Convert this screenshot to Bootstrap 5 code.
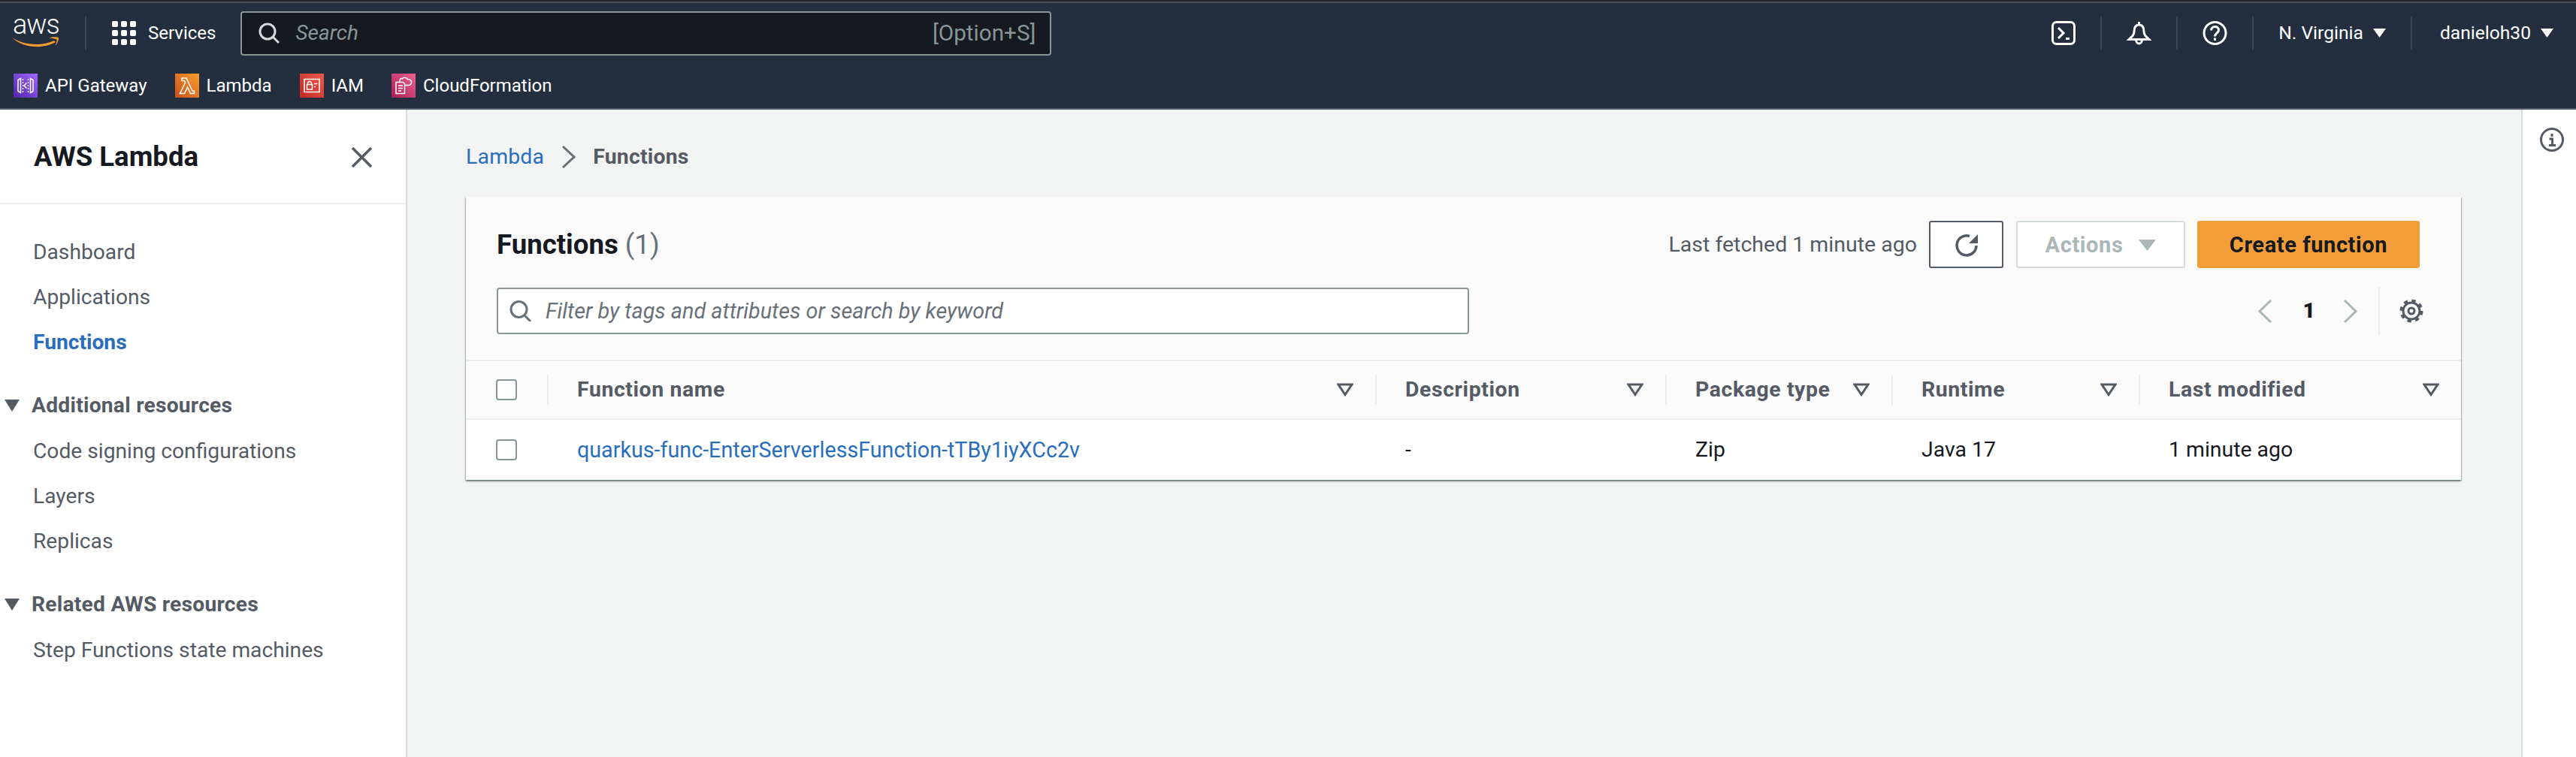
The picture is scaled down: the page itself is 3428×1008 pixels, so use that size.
<!DOCTYPE html>
<html lang="en">
<head>
    <meta charset="UTF-8">
    <title>Functions | Lambda</title>
    <link href="https://cdn.jsdelivr.net/npm/bootstrap@5.3.0/dist/css/bootstrap.min.css" rel="stylesheet">
    <style>
        html, body { height: 100%; }
        body {
            font-family: Roboto, "Liberation Sans", sans-serif;
            font-size: 28.4px;
            line-height: 40px;
            color: #16191f;
            background: #f2f3f3;
            overflow: hidden;
        }
        svg { display: block; flex: none; }

        /* top console bar */
        .console-bar { background: #232f3e; color: #fff; font-size: 24px; flex: none; }
        .bar-edge { height: 2px; background: #1d2632; }
        .bar-main { height: 82px; border-top: 2px solid #4b5058; padding: 0 30px 0 15px; }
        .bar-favs { height: 60px; padding-left: 18px; gap: 37px; border-bottom: 2px solid #545b64; box-sizing: content-box; }
        .bar-sep { width: 2px; height: 44px; background: #414750; }
        .logo-box { width: 64px; height: 38px; flex: none; }
        .logo-word { display: block; height: 16px; padding-left: 2px; font-size: 36px; font-weight: 300; line-height: 16px; letter-spacing: -1px; }
        .logo-smile { margin-top: 8px; }
        .logo-sep { margin: 0 34px; }
        .right-sep { margin: 0 33px; }
        .right-sep-wide { margin-right: 37px; }
        .svc-text { margin: 0 33px 0 16px; }
        .top-search {
            width: 1079px;
            height: 59px;
            background: #16191f;
            border: 2px solid #879596;
            border-radius: 4px;
            padding: 0 19px 0 22px;
            color: #aab7b8;
            font-size: 28px;
        }
        .top-search em { margin-left: 21px; color: #879596; }
        .search-hint { font-size: 29.7px; color: #879596; }
        .top-right { font-size: 24.6px; }
        .caret-gap { margin-left: 13px; }
        .fav-icon { width: 32px; height: 32px; margin-right: 10px; }

        /* sidebar */
        .page-row { min-height: 0; }
        .side-panel { width: 542px; background: #fff; border-right: 2px solid #d5dbdb; flex: none; color: #545b64; font-size: 28.2px; }
        .side-head { height: 126px; padding: 2px 45px 0 45px; border-bottom: 2px solid #eaeded; }
        .side-head h2 { font-size: 36.6px; font-weight: 700; color: #16191f; margin: 0; }
        .side-links { padding-top: 34px; margin: 0; }
        .side-links a { display: block; height: 60px; line-height: 60px; padding-left: 44px; color: #545b64; text-decoration: none; }
        .side-links a.is-active { color: #2a6ebb; font-weight: 700; }
        .side-section { height: 62px; margin-top: 23px; padding-left: 6px; font-weight: 700; gap: 16px; letter-spacing: .25px; }

        /* main column */
        .work-area { padding: 43px 80px 0 78px; min-width: 0; }
        .crumbs { --bs-breadcrumb-margin-bottom: 0; height: 40px; flex-wrap: nowrap; }
        .crumbs .breadcrumb-item { padding: 0; display: flex; align-items: center; color: #545b64; font-weight: 700; letter-spacing: .2px; }
        .crumbs .breadcrumb-item::before { display: none; }
        .crumbs a { color: #2a6ebb; text-decoration: none; font-weight: 400; }
        .crumbs svg { margin: 0 23px; }

        .fn-card {
            margin-top: 33px;
            background: #fafafa;
            border: 0;
            border-radius: 0;
            box-shadow: 0 2px 2px 0 rgba(0, 28, 36, .45), 1px 1px 1px 0 rgba(0, 28, 36, .15), -1px 1px 1px 0 rgba(0, 28, 36, .15);
        }
        .fn-head { padding: 32px 55px 34px 41px; }
        .fn-title { font-size: 36.6px; font-weight: 700; margin: 0; }
        .fn-title span { font-weight: 400; color: #687078; }
        .fetched { color: #545b64; margin-right: 16px; font-size: 28.5px; }
        .act-btn {
            height: 63px;
            padding: 2px 0 0;
            border-radius: 3px;
            font-size: 29px;
            font-weight: 700;
            letter-spacing: .6px;
            line-height: 1;
        }
        .btn-refresh { width: 99px; background: #fff; border: 2px solid #545b64; }
        .btn-actions { width: 225px; margin-left: 17px; background: #fff; border: 2px solid #d5dbdb; color: #aab7b8; gap: 21px; }
        .btn-actions:disabled { background: #fff; border-color: #d5dbdb; color: #aab7b8; opacity: 1; }
        .btn-create { width: 296px; margin-left: 16px; background: #f29d38; border: 0; color: #16191f; }
        .filter-row { margin-top: 26px; height: 62px; }
        .filter-box {
            width: 1294px;
            height: 62px;
            background: #fff;
            border: 2px solid #879596;
            border-radius: 4px;
            padding-left: 15px;
            gap: 18px;
        }
        .filter-box .form-control {
            font-size: 28.8px;
            font-style: italic;
            padding: 2px 0 0;
            border: 0;
            background: transparent;
            box-shadow: none;
        }
        .filter-box .form-control::placeholder { color: #687078; opacity: 1; }
        .pager { margin-right: -6px; color: #16191f; font-weight: 700; }
        .pager b { margin: 0 37px 0 41px; }
        .pager-sep { width: 2px; height: 64px; background: #eaeded; margin: 0 25px 0 27px; }

        .fn-table { margin: 0; table-layout: fixed; --bs-table-bg: transparent; color: #16191f; }
        .fn-table col.c1 { width: 108px; }
        .fn-table col.c2 { width: 1102px; }
        .fn-table col.c3 { width: 386px; }
        .fn-table col.c4 { width: 301px; }
        .fn-table col.c5 { width: 329px; }
        .fn-table > thead > tr > th {
            height: 78px;
            padding: 0;
            background: #fafafa;
            border-top: 2px solid #eaeded;
            border-bottom: 2px solid #eaeded;
            color: #545b64;
            font-weight: 700;
            letter-spacing: .6px;
            vertical-align: middle;
        }
        .fn-table > tbody > tr > td {
            height: 81px;
            padding: 0 0 0 40px;
            background: #fff;
            border: 0;
            vertical-align: middle;
        }
        .fn-table a { color: #2a6ebb; text-decoration: none; font-size: 28.7px; }
        .th-inner { height: 40px; padding: 0 29px 0 38px; border-left: 2px solid #eaeded; }
        .fn-table .form-check-input {
            width: 28px;
            height: 28px;
            margin: 0;
            display: block;
            border: 2px solid #879596;
            border-radius: 4px;
        }
        .fn-table > thead > tr > th.th-check { padding-left: 40px; }

        .info-rail { width: 73px; background: #fff; border-left: 2px solid #d5dbdb; padding: 24px 0 0 23px; flex: none; }
    </style>
</head>
<body class="d-flex flex-column">
    <header class="console-bar">
        <div class="bar-edge"></div>
        <div class="bar-main d-flex align-items-center">
            <div class="logo-box">
                <span class="logo-word">aws</span>
                <svg class="logo-smile" width="64" height="14" viewBox="0 24 64 14">
                    <path fill="#ef9a2e" d="M1 25C16 35 40 37 57 29L59 31C42 41 15 39 1 25Z"/>
                    <path fill="#ef9a2e" d="M50 25.5C55 24 61 24 63 25C63.5 28 61 33 59 36C59.5 33 61 29 60.5 27.5C58 27 54 25.5 50 25.5Z"/>
                </svg>
            </div>
            <span class="bar-sep logo-sep"></span>
            <svg width="32" height="32" viewBox="0 0 32 32" fill="#fff">
                <rect x="0" y="0" width="8" height="8" rx="2"/><rect x="12" y="0" width="8" height="8" rx="2"/><rect x="24" y="0" width="8" height="8" rx="2"/>
                <rect x="0" y="12" width="8" height="8" rx="2"/><rect x="12" y="12" width="8" height="8" rx="2"/><rect x="24" y="12" width="8" height="8" rx="2"/>
                <rect x="0" y="24" width="8" height="8" rx="2"/><rect x="12" y="24" width="8" height="8" rx="2"/><rect x="24" y="24" width="8" height="8" rx="2"/>
            </svg>
            <span class="svc-text">Services</span>
            <div class="top-search d-flex align-items-center">
                <svg width="28" height="28" viewBox="0 0 28 28" fill="none" stroke="#d5dbdb" stroke-width="3"><circle cx="12" cy="12" r="10"/><path d="M19 19l8 8"/></svg>
                <em>Search</em>
                <span class="search-hint ms-auto">[Option+S]</span>
            </div>
            <div class="top-right ms-auto d-flex align-items-center">
                <svg width="32" height="32" viewBox="0 0 32 32" fill="none" stroke="#fff" stroke-width="3"><rect x="1.5" y="1.5" width="29" height="29" rx="5"/><path d="M9 9l7 7-7 7M19 23.5h5"/></svg>
                <span class="bar-sep right-sep"></span>
                <svg width="33" height="32" viewBox="0 0 33 32" fill="none" stroke="#fff" stroke-width="3"><path d="M16.5 1v4M16.5 5C11 5 10 10 10 14C10 18 8 20 3 24.5H30C25 20 23 18 23 14C23 10 22 5 16.5 5ZM12.5 25a4 5 0 0 0 8 0"/></svg>
                <span class="bar-sep right-sep"></span>
                <svg width="33" height="32" viewBox="0 0 33 32" fill="none" stroke="#fff" stroke-width="3"><circle cx="16.5" cy="16" r="14.5"/><path d="M11.5 12.5C11.5 6 21.5 6 21.5 12C21.5 16 16.5 16 16.5 20.5"/><path d="M16.5 22.5v3.5"/></svg>
                <span class="bar-sep right-sep"></span>
                <span>N. Virginia</span>
                <svg class="caret-gap" width="17" height="12" viewBox="0 0 17 12" fill="#fff"><path d="M0 0h17L8.5 12z"/></svg>
                <span class="bar-sep right-sep right-sep-wide"></span>
                <span>danieloh30</span>
                <svg class="caret-gap" width="17" height="12" viewBox="0 0 17 12" fill="#fff"><path d="M0 0h17L8.5 12z"/></svg>
            </div>
        </div>
        <div class="bar-favs d-flex align-items-center">
            <div class="d-flex align-items-center">
                <svg class="fav-icon" viewBox="0 0 32 32">
                    <defs><linearGradient id="gPurple" x1="0" y1="1" x2="1" y2="0"><stop offset="0" stop-color="#4d27a8"/><stop offset="1" stop-color="#a166ff"/></linearGradient></defs>
                    <rect width="32" height="32" fill="url(#gPurple)"/>
                    <g fill="none" stroke="#fff" stroke-width="1.5"><path d="M6 8.5L9.5 6.5V25.5L6 23.5ZM26 8.5L22.5 6.5V25.5L26 23.5Z"/><path stroke-dasharray="2 2" d="M12.5 7V25M19.5 7V25"/><path d="M17.5 12.5L14 16L17.5 19.5"/></g>
                </svg>
                <span>API Gateway</span>
            </div>
            <div class="d-flex align-items-center">
                <svg class="fav-icon" viewBox="0 0 32 32">
                    <defs><linearGradient id="gOrange" x1="0" y1="1" x2="1" y2="0"><stop offset="0" stop-color="#c8511b"/><stop offset="1" stop-color="#f99f2e"/></linearGradient></defs>
                    <rect width="32" height="32" fill="url(#gOrange)"/>
                    <path fill="none" stroke="#fff" stroke-width="1.5" d="M6.5 26.5H12.5L16.5 18L20.5 26.5H25.5V23H23L15 6H9V9.5H12.5L13.5 12Z"/>
                </svg>
                <span>Lambda</span>
            </div>
            <div class="d-flex align-items-center">
                <svg class="fav-icon" viewBox="0 0 32 32">
                    <defs><linearGradient id="gRed" x1="0" y1="1" x2="1" y2="0"><stop offset="0" stop-color="#bd2a20"/><stop offset="1" stop-color="#f0584f"/></linearGradient></defs>
                    <rect width="32" height="32" fill="url(#gRed)"/>
                    <g fill="none" stroke="#fff" stroke-width="1.5"><rect x="6" y="7.5" width="20" height="17"/><rect x="9.5" y="14.5" width="7" height="6.5"/><path d="M10.5 14.5V13a2.5 2.5 0 0 1 5 0V14.5M19 13.5h4.5M19 17.5h2"/></g>
                </svg>
                <span>IAM</span>
            </div>
            <div class="d-flex align-items-center">
                <svg class="fav-icon" viewBox="0 0 32 32">
                    <defs><linearGradient id="gPink" x1="0" y1="1" x2="1" y2="0"><stop offset="0" stop-color="#a81e56"/><stop offset="1" stop-color="#f0628f"/></linearGradient></defs>
                    <rect width="32" height="32" fill="url(#gPink)"/>
                    <g fill="none" stroke="#fff" stroke-width="1.5"><path d="M6 11.5H15.5L17.5 13.5V26.5H6Z"/><path d="M9 16h6M9 19.5h6M9 23h4"/><path d="M11 11V9C11 7 13 6 14.5 7C15.5 4.5 20 4.5 21 7.5C24 7 26.5 9 26.5 11.5C26.5 14 24.5 15.5 22.5 15.5H18"/></g>
                </svg>
                <span>CloudFormation</span>
            </div>
        </div>
    </header>

    <div class="page-row d-flex flex-grow-1">
        <aside class="side-panel">
            <div class="side-head d-flex align-items-center justify-content-between">
                <h2>AWS Lambda</h2>
                <svg width="27" height="27" viewBox="0 0 27 27" fill="none" stroke="#545b64" stroke-width="3.5"><path d="M1 1l25 25M26 1L1 26"/></svg>
            </div>
            <div class="side-links">
                <a href="#">Dashboard</a>
                <a href="#">Applications</a>
                <a href="#" class="is-active">Functions</a>
                <div class="side-section d-flex align-items-center">
                    <svg width="20" height="16" viewBox="0 0 20 16" fill="#545b64"><path d="M0 0h20L10 16z"/></svg>
                    <span>Additional resources</span>
                </div>
                <a href="#">Code signing configurations</a>
                <a href="#">Layers</a>
                <a href="#">Replicas</a>
                <div class="side-section d-flex align-items-center">
                    <svg width="20" height="16" viewBox="0 0 20 16" fill="#545b64"><path d="M0 0h20L10 16z"/></svg>
                    <span>Related AWS resources</span>
                </div>
                <a href="#">Step Functions state machines</a>
            </div>
        </aside>

        <main class="work-area flex-grow-1">
            <nav aria-label="breadcrumb">
                <ol class="breadcrumb crumbs align-items-center">
                    <li class="breadcrumb-item"><a href="#">Lambda</a></li>
                    <li class="breadcrumb-item active">
                        <svg width="19" height="30" viewBox="0 0 19 30" fill="none" stroke="#687078" stroke-width="3"><path d="M2 1l15 14L2 29"/></svg>
                        Functions
                    </li>
                </ol>
            </nav>

            <div class="card fn-card">
                <div class="fn-head">
                    <div class="d-flex align-items-center">
                        <h1 class="fn-title">Functions <span>(1)</span></h1>
                        <span class="fetched ms-auto">Last fetched 1 minute ago</span>
                        <button class="btn act-btn btn-refresh d-flex align-items-center justify-content-center" type="button">
                            <svg width="32" height="32" viewBox="0 0 32 32" fill="none" stroke="#545b64" stroke-width="3.5"><path d="M20 3.5A13 13 0 1 0 29 16"/><path fill="#545b64" stroke="none" d="M31 1V13H19Z"/></svg>
                        </button>
                        <button class="btn act-btn btn-actions d-flex align-items-center justify-content-center" type="button" disabled>
                            Actions
                            <svg width="23" height="15" viewBox="0 0 23 15" fill="#aab7b8"><path d="M0 0h23L11.5 15z"/></svg>
                        </button>
                        <button class="btn act-btn btn-create" type="button">Create function</button>
                    </div>
                    <div class="filter-row d-flex align-items-center">
                        <div class="filter-box d-flex align-items-center">
                            <svg width="30" height="28" viewBox="0 0 30 28" fill="none" stroke="#687078" stroke-width="3"><circle cx="12.5" cy="12" r="10.5"/><path d="M20 20l8 8"/></svg>
                            <input class="form-control" type="text" placeholder="Filter by tags and attributes or search by keyword">
                        </div>
                        <div class="pager ms-auto d-flex align-items-center">
                            <svg width="19" height="31" viewBox="0 0 19 31" fill="none" stroke="#aab7b8" stroke-width="3"><path d="M17 1L2 15.5 17 30"/></svg>
                            <b>1</b>
                            <svg width="20" height="31" viewBox="0 0 20 31" fill="none" stroke="#aab7b8" stroke-width="3"><path d="M2 1l15 14.5L2 30"/></svg>
                            <span class="pager-sep"></span>
                            <svg width="34" height="34" viewBox="0 0 34 34" fill="none" stroke="#545b64"><circle cx="17" cy="17" r="11" stroke-width="3"/><circle cx="17" cy="17" r="13.5" stroke-width="4" stroke-dasharray="5.3 5.3"/><circle cx="17" cy="17" r="4" stroke-width="3"/></svg>
                        </div>
                    </div>
                </div>

                <table class="table fn-table">
                    <colgroup><col class="c1"><col class="c2"><col class="c3"><col class="c4"><col class="c5"><col></colgroup>
                    <thead>
                        <tr>
                            <th class="th-check"><input class="form-check-input" type="checkbox" aria-label="Select all"></th>
                            <th><div class="th-inner d-flex align-items-center justify-content-between">Function name<svg width="22" height="18" viewBox="0 0 22 18" fill="none" stroke="#545b64" stroke-width="3"><path d="M2 2h18L11 15.5z"/></svg></div></th>
                            <th><div class="th-inner d-flex align-items-center justify-content-between">Description<svg width="22" height="18" viewBox="0 0 22 18" fill="none" stroke="#545b64" stroke-width="3"><path d="M2 2h18L11 15.5z"/></svg></div></th>
                            <th><div class="th-inner d-flex align-items-center justify-content-between">Package type<svg width="22" height="18" viewBox="0 0 22 18" fill="none" stroke="#545b64" stroke-width="3"><path d="M2 2h18L11 15.5z"/></svg></div></th>
                            <th><div class="th-inner d-flex align-items-center justify-content-between">Runtime<svg width="22" height="18" viewBox="0 0 22 18" fill="none" stroke="#545b64" stroke-width="3"><path d="M2 2h18L11 15.5z"/></svg></div></th>
                            <th><div class="th-inner d-flex align-items-center justify-content-between">Last modified<svg width="22" height="18" viewBox="0 0 22 18" fill="none" stroke="#545b64" stroke-width="3"><path d="M2 2h18L11 15.5z"/></svg></div></th>
                        </tr>
                    </thead>
                    <tbody>
                        <tr>
                            <td><input class="form-check-input" type="checkbox" aria-label="Select row"></td>
                            <td><a href="#">quarkus-func-EnterServerlessFunction-tTBy1iyXCc2v</a></td>
                            <td>-</td>
                            <td>Zip</td>
                            <td>Java 17</td>
                            <td>1 minute ago</td>
                        </tr>
                    </tbody>
                </table>
            </div>
        </main>

        <aside class="info-rail">
            <svg width="32" height="32" viewBox="0 0 32 32" fill="none" stroke="#545b64" stroke-width="3"><circle cx="16" cy="16" r="14.5"/><path d="M16 8v4M12.5 15H16.5V23M12 23.5h9"/></svg>
        </aside>
    </div>

    <script src="https://cdn.jsdelivr.net/npm/bootstrap@5.3.0/dist/js/bootstrap.bundle.min.js"></script>
</body>
</html>
